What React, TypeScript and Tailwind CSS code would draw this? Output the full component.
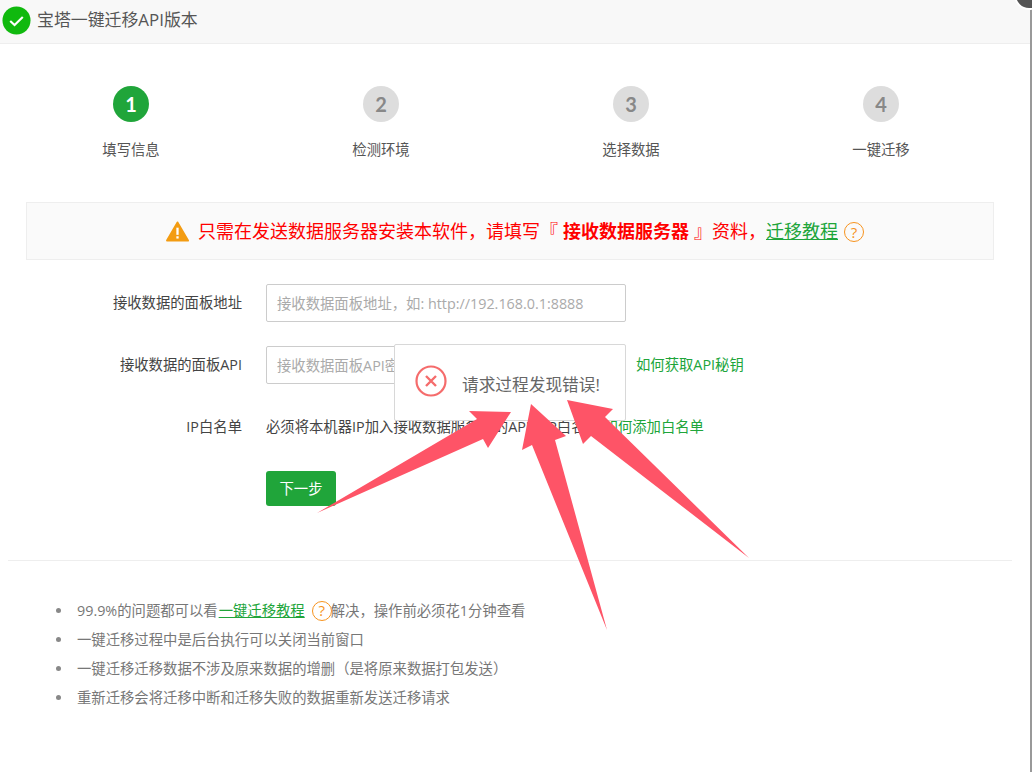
function HelpIcon({ className = '' }: { className?: string }) {
  return (
    <span
      className={`inline-flex h-[20px] w-[20px] shrink-0 items-center justify-center rounded-full border border-[#f7931e] text-[15px] leading-none text-[#f7931e] ${className}`}
    >
      ?
    </span>
  );
}

const steps = [
  { num: 1, label: '填写信息' },
  { num: 2, label: '检测环境' },
  { num: 3, label: '选择数据' },
  { num: 4, label: '一键迁移' },
];

function Bullet() {
  return <span className="mr-[16px] h-[5px] w-[5px] shrink-0 rounded-full bg-[#888]" />;
}

export default function App() {
  return (
    <div className="relative h-[772px] w-[1032px] overflow-hidden bg-white font-['Open_Sans','Noto_Sans_CJK_SC',sans-serif] text-[14.35px] text-[#444]">
      <header className="flex h-[44px] items-center gap-[6px] border-b border-[#eee] bg-[#f8f8f8] pb-[3px] pl-[2px]">
        <svg viewBox="0 0 30 30" className="h-[29px] w-[29px]">
          <circle cx="15" cy="15" r="14.5" fill="#10b90e" />
          <path d="M8.5 15.5l4.5 4.2 8.5-8.4" fill="none" stroke="#fff" strokeWidth="2.2" />
        </svg>
        <h1 className="text-[16.9px] text-[#555]">宝塔一键迁移API版本</h1>
      </header>

      <div className="ml-[6px] mt-[42px] grid w-[1000px] grid-cols-4">
        {steps.map((s) => (
          <div key={s.num} className="flex flex-col items-center">
            <div
              className={`flex h-[36px] w-[36px] items-center justify-center rounded-full font-['Lato',sans-serif] text-[20px] font-bold ${
                s.num === 1 ? 'bg-[#20a53a] text-white' : 'bg-[#ddd] text-[#888]'
              }`}
            >
              {s.num}
            </div>
            <div className="mt-[18px] leading-[20px] text-[#555]">{s.label}</div>
          </div>
        ))}
      </div>

      <div className="mx-[26px] mt-[42px] flex h-[58px] w-[968px] items-center justify-center border border-[#eee] bg-[#fafafa] pl-[10px] text-[18px] text-[#f00]">
        <svg viewBox="0 0 24 22" className="mr-[9px] h-[21px] w-[23px]">
          <path d="M12 1.5L23 20.5H1z" fill="#f39c12" stroke="#f39c12" strokeWidth="2" strokeLinejoin="round" />
          <rect x="10.8" y="7" width="2.4" height="7.5" fill="#fff" />
          <rect x="10.8" y="16" width="2.4" height="2.4" fill="#fff" />
        </svg>
        <span>{'只需在发送数据服务器安装本软件\uFF0C请填写『'}</span>
        <b className="mx-[5px]">接收数据服务器</b>
        <span>{'』资料\uFF0C'}</span>
        <a className="text-[#20a53a] underline">迁移教程</a>
        <HelpIcon className="ml-[6px] mt-[2px]" />
      </div>

      <form className="ml-[26px] mt-[24px] flex flex-col">
        <div className="flex items-center">
          <label className="w-[216px] text-right">接收数据的面板地址</label>
          <input
            placeholder={'接收数据面板地址\uFF0C如: http://192.168.0.1:8888'}
            className="ml-[24px] h-[38px] w-[360px] rounded-[2px] border border-[#ccc] px-[10px] text-[14.35px] placeholder:text-[#aaa]"
          />
        </div>
        <div className="mt-[24px] flex items-center">
          <label className="w-[216px] text-right">接收数据的面板API</label>
          <input
            placeholder="接收数据面板API密钥"
            className="ml-[24px] h-[38px] w-[360px] rounded-[2px] border border-[#ccc] px-[10px] text-[14.35px] placeholder:text-[#aaa]"
          />
          <a className="ml-[10px] text-[#20a53a]">如何获取API秘钥</a>
        </div>
        <div className="mt-[32px] flex h-[22px] items-center whitespace-nowrap">
          <label className="w-[216px] text-right">IP白名单</label>
          <span className="ml-[24px]">必须将本机器IP加入接收数据服务器的API的IP白名单,</span>
          <a className="text-[#20a53a]">如何添加白名单</a>
        </div>
        <button
          type="button"
          className="ml-[240px] mt-[33px] h-[35px] w-[70px] rounded-[3px] bg-[#20a53a] text-[14.35px] text-white"
        >
          下一步
        </button>
      </form>

      <div className="ml-[8px] mt-[54px] w-[1004px] border-t border-[#eee]" />

      <ul className="ml-[56px] mt-[35px] flex flex-col leading-[29px] text-[#777]">
        <li className="flex items-center">
          <Bullet />
          99.9%的问题都可以看
          <a className="ml-[1px] text-[#20a53a] underline">一键迁移教程</a>
          <HelpIcon className="ml-[7px] mr-[-1px]" />
          {'解决\uFF0C操作前必须花1分钟查看'}
        </li>
        <li className="flex items-center">
          <Bullet />
          一键迁移过程中是后台执行可以关闭当前窗口
        </li>
        <li className="flex items-center">
          <Bullet />
          {'一键迁移迁移数据不涉及原来数据的增删\uFF08是将原来数据打包发送\uFF09'}
        </li>
        <li className="flex items-center">
          <Bullet />
          重新迁移会将迁移中断和迁移失败的数据重新发送迁移请求
        </li>
      </ul>

      {/* window edge and close button */}
      <div className="absolute bottom-0 right-0 top-[8px] w-[2px] bg-[#999]" />
      <div className="absolute left-[1014px] top-[-20px] h-[30px] w-[30px] rounded-full border-2 border-white bg-[#555]" />

      {/* error toast */}
      <div className="absolute left-[394px] top-[344px] flex h-[77px] w-[232px] items-center rounded-[2px] border border-[#d8d8d8] bg-white pl-[20px]">
        <svg viewBox="0 0 32 32" className="mt-[-3px] h-[32px] w-[32px]">
          <circle cx="16" cy="16" r="14.5" fill="none" stroke="#f56c6c" strokeWidth="2.2" />
          <path d="M11 11l10 10M21 11L11 21" stroke="#f56c6c" strokeWidth="2.4" />
        </svg>
        <span className="ml-[15px] mt-[4px] text-[16.7px] text-[#666]">请求过程发现错误!</span>
      </div>

      {/* annotation arrows */}
      <svg viewBox="0 0 1032 772" className="pointer-events-none absolute left-0 top-0 h-[772px] w-[1032px]">
        <polygon fill="#fe5467" points="317,513 477,419 469,411 511,412 488,448 483,439" />
        <polygon fill="#fe5467" points="607,630 532,445 522,450 531,404 566,436 555,440" />
        <polygon fill="#fe5467" points="749,558 591,436 583,444 567,400 613,409 605,417" />
      </svg>
    </div>
  );
}
